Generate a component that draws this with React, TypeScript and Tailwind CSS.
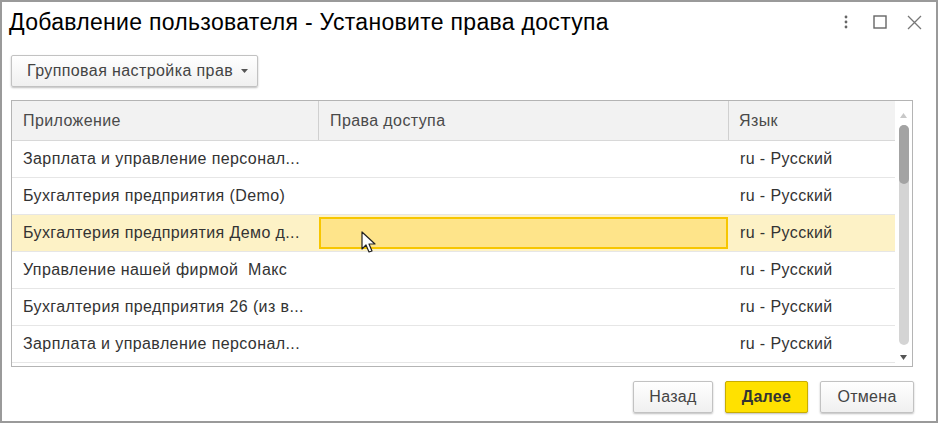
import React from "react";

const rows = [
  "Зарплата и управление персонал...",
  "Бухгалтерия предприятия (Demo)",
  "Бухгалтерия предприятия Демо д...",
  "Управление нашей фирмой  Макс",
  "Бухгалтерия предприятия 26 (из в...",
  "Зарплата и управление персонал...",
];

function Btn({ children, w, primary }: { children: React.ReactNode; w: string; primary?: boolean }) {
  return (
    <div
      className={
        "h-[32px] flex items-center justify-center rounded-[2px] text-[16px] tracking-[0.3px] shadow-[0_1px_2px_rgba(0,0,0,0.25)] " +
        w +
        " " +
        (primary
          ? "bg-[#ffe100] border border-[#c9ad00] text-[#333] font-bold"
          : "bg-gradient-to-b from-white to-[#f0f0f0] border border-[#c2c2c2] text-[#444]")
      }
    >
      {children}
    </div>
  );
}

export default function App() {
  return (
    <div
      className="w-[938px] h-[423px] border-2 border-[#9a9a9a] bg-white flex flex-col text-[#333]"
      style={{ fontFamily: '"Liberation Sans", Arial, sans-serif' }}
    >
      {/* title bar */}
      <div className="h-[40px] flex items-center pl-[7px] pr-[14px]">
        <div className="text-[23px] tracking-[0.3px] text-black flex-1 leading-none whitespace-nowrap">
          Добавление пользователя - Установите права доступа
        </div>
        <div className="flex items-center gap-[20px] text-[#666]">
          <svg width="14" height="14" viewBox="0 0 14 14">
            <circle cx="7" cy="2" r="1.4" fill="#666" />
            <circle cx="7" cy="7" r="1.4" fill="#666" />
            <circle cx="7" cy="12" r="1.4" fill="#666" />
          </svg>
          <svg width="14" height="14" viewBox="0 0 14 14">
            <rect x="1" y="1" width="12" height="12" fill="none" stroke="#666" strokeWidth="1.4" />
          </svg>
          <svg width="15" height="15" viewBox="0 0 15 15">
            <path d="M1 1 L14 14 M14 1 L1 14" stroke="#777" strokeWidth="1.3" />
          </svg>
        </div>
      </div>

      {/* toolbar */}
      <div className="pl-[9px] mt-[13px]">
        <div className="w-[247px] h-[32px] flex items-center pl-[15px] gap-[8px] rounded-[2px] border border-[#c2c2c2] bg-gradient-to-b from-white to-[#f0f0f0] shadow-[0_1px_2px_rgba(0,0,0,0.25)] text-[16px] tracking-[0.4px] text-[#444] whitespace-nowrap">
          <span>Групповая настройка прав</span>
          <svg width="7" height="4" viewBox="0 0 7 4">
            <path d="M0 0 L7 0 L3.5 4 Z" fill="#555" />
          </svg>
        </div>
      </div>

      {/* table */}
      <div className="ml-[9px] mt-[13px] w-[902px] h-[267px] border border-[#b4b4b4] flex">
        <div className="flex-1 flex flex-col">
          <div className="h-[40px] flex bg-[#f2f2f2] border-b border-[#d8d8d8] text-[16px] tracking-[0.4px] text-[#4a4a4a]">
            <div className="w-[307px] flex items-center pl-[11px] border-r border-[#d0d0d0]">Приложение</div>
            <div className="w-[410px] flex items-center pl-[11px] border-r border-[#d0d0d0]">Права доступа</div>
            <div className="flex-1 flex items-center pl-[10px]">Язык</div>
          </div>
          {rows.map((r, i) => {
            const sel = i === 2;
            return (
              <div
                key={i}
                className={
                  "h-[37px] flex text-[16px] tracking-[0.4px] border-b border-[#e6e6e6] " +
                  (sel ? "bg-[#fdf2c6]" : "")
                }
              >
                <div className="w-[307px] flex items-center pl-[11px] whitespace-pre overflow-hidden">{r}</div>
                <div className="w-[410px] flex items-center py-[2px] pr-[1px]">
                  {sel && (
                    <div className="relative w-full h-full border-2 border-[#f7c600] bg-[#fee48a]">
                      <svg className="absolute left-[40px] top-[12px]" width="16" height="24" viewBox="0 0 16 24">
                        <path
                          d="M1 1 L1 18 L5 14 L8 21 L11 20 L8 13 L14 13 Z"
                          fill="white"
                          stroke="#222"
                          strokeWidth="1.2"
                          strokeLinejoin="round"
                        />
                      </svg>
                    </div>
                  )}
                </div>
                <div className="flex-1 flex items-center pl-[11px] whitespace-nowrap">ru - Русский</div>
              </div>
            );
          })}
        </div>
        {/* scrollbar */}
        <div className="w-[17px] flex flex-col items-center pt-[12px] pb-[6px]">
          <svg width="7" height="5" viewBox="0 0 7 5">
            <path d="M0 5 L7 5 L3.5 0 Z" fill="#c8c8c8" />
          </svg>
          <div className="mt-[7px] w-[10px] flex-1 rounded-full bg-[#d4d4d4] flex flex-col">
            <div className="h-[59px] rounded-full bg-[#a3a3a3]" />
          </div>
          <div className="h-[10px]" />
          <svg width="7" height="5" viewBox="0 0 7 5">
            <path d="M0 0 L7 0 L3.5 5 Z" fill="#555" />
          </svg>
        </div>
      </div>

      {/* bottom buttons */}
      <div className="flex justify-end gap-[12px] pr-[22px] mt-[14px]">
        <Btn w="w-[80px]">Назад</Btn>
        <Btn w="w-[83px]" primary>
          Далее
        </Btn>
        <Btn w="w-[94px]">Отмена</Btn>
      </div>
    </div>
  );
}
